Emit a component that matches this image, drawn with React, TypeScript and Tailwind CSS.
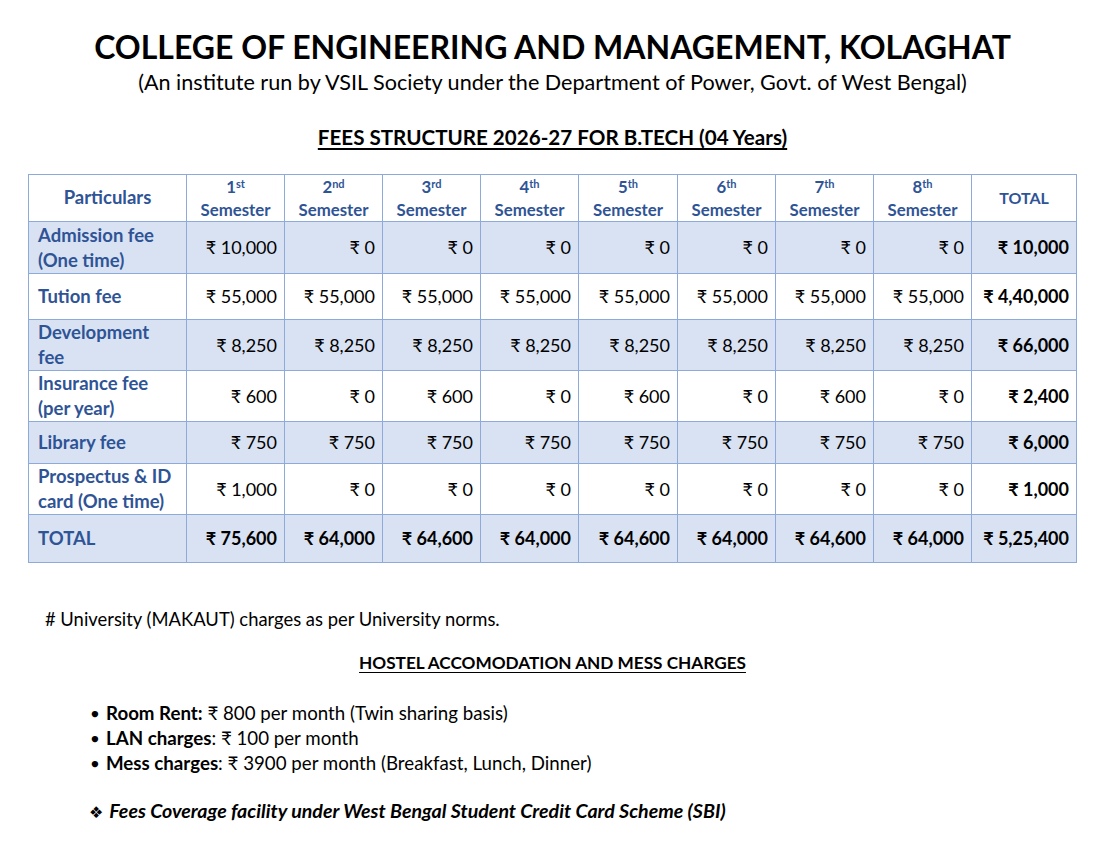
const ordinals = [
  ["1", "st"],
  ["2", "nd"],
  ["3", "rd"],
  ["4", "th"],
  ["5", "th"],
  ["6", "th"],
  ["7", "th"],
  ["8", "th"],
];

type Row = {
  label: string[];
  values: string[];
  total: string;
  shade: boolean;
  height: string;
  bold?: boolean;
};

const rows: Row[] = [
  {
    label: ["Admission fee", "(One time)"],
    values: ["₹ 10,000", "₹ 0", "₹ 0", "₹ 0", "₹ 0", "₹ 0", "₹ 0", "₹ 0"],
    total: "₹ 10,000",
    shade: true,
    height: "h-[52px]",
  },
  {
    label: ["Tution fee"],
    values: Array(8).fill("₹ 55,000"),
    total: "₹ 4,40,000",
    shade: false,
    height: "h-[46px]",
  },
  {
    label: ["Development", "fee"],
    values: Array(8).fill("₹ 8,250"),
    total: "₹ 66,000",
    shade: true,
    height: "h-[50px]",
  },
  {
    label: ["Insurance fee", "(per year)"],
    values: ["₹ 600", "₹ 0", "₹ 600", "₹ 0", "₹ 600", "₹ 0", "₹ 600", "₹ 0"],
    total: "₹ 2,400",
    shade: false,
    height: "h-[51px]",
  },
  {
    label: ["Library fee"],
    values: Array(8).fill("₹ 750"),
    total: "₹ 6,000",
    shade: true,
    height: "h-[42px]",
  },
  {
    label: ["Prospectus & ID", "card (One time)"],
    values: ["₹ 1,000", "₹ 0", "₹ 0", "₹ 0", "₹ 0", "₹ 0", "₹ 0", "₹ 0"],
    total: "₹ 1,000",
    shade: false,
    height: "h-[51px]",
  },
  {
    label: ["TOTAL"],
    values: ["₹ 75,600", "₹ 64,000", "₹ 64,600", "₹ 64,000", "₹ 64,600", "₹ 64,000", "₹ 64,600", "₹ 64,000"],
    total: "₹ 5,25,400",
    shade: true,
    height: "h-[48px]",
    bold: true,
  },
];

export default function App() {
  return (
    <div className="w-[1105px] h-[842px] bg-white text-black font-['Lato','Noto_Sans',sans-serif] overflow-hidden">
      {/* Heading */}
      <div className="flex flex-col items-center pt-[29px]">
        <h1 className="text-[32px] leading-[36px] font-bold">
          COLLEGE OF ENGINEERING AND MANAGEMENT, KOLAGHAT
        </h1>
        <p className="text-[21.6px] leading-[28px] mt-[3px]">
          (An institute run by VSIL Society under the Department of Power, Govt. of West Bengal)
        </p>
        <h2 className="text-[20.6px] leading-[26px] font-bold underline underline-offset-[3px] mt-[28px]">
          FEES STRUCTURE 2026-27 FOR B.TECH (04 Years)
        </h2>
      </div>

      {/* Fees table */}
      <table className="mx-auto mt-[24px] w-[1048px] border-collapse table-fixed">
        <colgroup>
          <col className="w-[158px]" />
          <col className="w-[98px]" />
          <col className="w-[98px]" />
          <col className="w-[98px]" />
          <col className="w-[98px]" />
          <col className="w-[99px]" />
          <col className="w-[98px]" />
          <col className="w-[98px]" />
          <col className="w-[98px]" />
          <col className="w-[105px]" />
        </colgroup>
        <thead>
          <tr className="h-[46px]">
            <th className="border border-[#8eaadb] text-[18.5px] font-bold text-[#2f5496]">
              Particulars
            </th>
            {ordinals.map(([n, s]) => (
              <th
                key={n}
                className="border border-[#8eaadb] text-[16.8px] font-bold text-[#2f5496] align-top"
              >
                <div className="leading-[24px]">
                  {n}
                  <sup className="text-[11px]">{s}</sup>
                </div>
                <div className="leading-[22px]">Semester</div>
              </th>
            ))}
            <th className="border border-[#8eaadb] text-[16px] font-bold text-[#2f5496]">TOTAL</th>
          </tr>
        </thead>
        <tbody>
          {rows.map((row) => (
            <tr key={row.label.join(" ")} className={`${row.height} ${row.shade ? "bg-[#d9e2f3]" : "bg-white"}`}>
              <td className="border border-[#8eaadb] pl-[9px] text-[18.5px] leading-[25px] font-bold text-[#2f5496]">
                {row.label.map((l) => (
                  <div key={l}>{l}</div>
                ))}
              </td>
              {row.values.map((v, i) => (
                <td
                  key={i}
                  className={`border border-[#8eaadb] pr-[7px] text-right text-[18px] ${row.bold ? "font-bold" : ""}`}
                >
                  {v}
                </td>
              ))}
              <td className="border border-[#8eaadb] pr-[7px] text-right text-[18px] font-bold">{row.total}</td>
            </tr>
          ))}
        </tbody>
      </table>

      {/* Notes */}
      <p className="pl-[45px] mt-[45px] text-[18.4px] leading-[22px]"># University (MAKAUT) charges as per University norms.</p>

      <div className="flex justify-center mt-[22px]">
        <h3 className="text-[17.2px] leading-[22px] font-bold underline underline-offset-[3px]">
          HOSTEL ACCOMODATION AND MESS CHARGES
        </h3>
      </div>

      <ul className="pl-[91px] mt-[27px] text-[18.7px] leading-[25px]">
        <li className="flex items-center">
          <span className="w-[15px] text-[13px]">●</span>
          <span>
            <b>Room Rent:</b> ₹ 800 per month (Twin sharing basis)
          </span>
        </li>
        <li className="flex items-center">
          <span className="w-[15px] text-[13px]">●</span>
          <span>
            <b>LAN charges</b>: ₹ 100 per month
          </span>
        </li>
        <li className="flex items-center">
          <span className="w-[15px] text-[13px]">●</span>
          <span>
            <b>Mess charges</b>: ₹ 3900 per month (Breakfast, Lunch, Dinner)
          </span>
        </li>
      </ul>

      <p className="pl-[89px] mt-[24px] text-[19.6px] leading-[22px] font-bold italic">
        <span className="font-['DejaVu_Sans'] not-italic text-[16px] mr-[6px]">❖</span>
        Fees Coverage facility under West Bengal Student Credit Card Scheme (SBI)
      </p>
    </div>
  );
}
